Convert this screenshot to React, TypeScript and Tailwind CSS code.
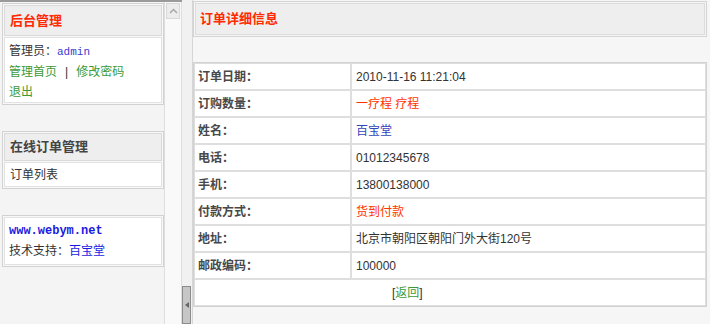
import React from "react";

const F = "font-['Liberation_Sans','Noto_Sans_CJK_SC',sans-serif]";
const MONO = "font-['Liberation_Mono','Noto_Sans_CJK_SC',monospace]";

const rows: { label: string; value: React.ReactNode }[] = [
  { label: "订单日期：", value: <span className="text-[#333]">2010-11-16 11:21:04</span> },
  { label: "订购数量：", value: <span className="text-[#ff3300]">一疗程 疗程</span> },
  { label: "姓名：", value: <span className="text-[#3344bb]">百宝堂</span> },
  { label: "电话：", value: <span className="text-[#333]">01012345678</span> },
  { label: "手机：", value: <span className="text-[#333]">13800138000</span> },
  { label: "付款方式：", value: <span className="text-[#ff3300]">货到付款</span> },
  { label: "地址：", value: <span className="text-[#333]">北京市朝阳区朝阳门外大街120号</span> },
  { label: "邮政编码：", value: <span className="text-[#333]">100000</span> },
];

export default function App() {
  return (
    <div className={`w-[710px] h-[324px] flex bg-[#f4f4f4] overflow-hidden text-[12px] ${F}`}>
      {/* Left frame */}
      <div className="w-[182px] h-full flex border-t-2 border-[#9a9a9a]">
        <div className="w-[164px] flex flex-col pl-[2px] pt-px">
          {/* Panel 1 */}
          <div className="h-[102px] border border-[#d2d2d2] p-px bg-[#f8f8f8] flex flex-col gap-px">
            <div className="h-[31px] border border-[#dadada] bg-[#eeeeee] flex items-center pl-[5px] text-[13px] font-bold text-[#ff2a00]">
              后台管理
            </div>
            <div className="flex-1 border border-[#e2e2e2] bg-white pl-[4px] pt-[3px] leading-[20px] text-[12px] text-[#333]">
              <div>
                管理员：<span className={`${MONO} text-[11px] text-[#3b3bd0]`}>admin</span>
              </div>
              <div>
                <span className="text-[#3a9a3a]">管理首页</span>
                <span className="mx-[8px] text-[#333]">|</span>
                <span className="text-[#3a9a3a]">修改密码</span>
              </div>
              <div className="text-[#3a9a3a]">退出</div>
            </div>
          </div>
          {/* Panel 2 */}
          <div className="mt-[26px] h-[58px] border border-[#d2d2d2] p-px bg-[#f8f8f8] flex flex-col gap-px">
            <div className="h-[28px] border border-[#dadada] bg-[#eeeeee] flex items-center pl-[5px] text-[13px] font-bold text-[#444]">
              在线订单管理
            </div>
            <div className="flex-1 border border-[#e2e2e2] bg-white pl-[5px] flex items-center text-[#333]">
              订单列表
            </div>
          </div>
          {/* Panel 3 */}
          <div className="mt-[26px] h-[52px] border border-[#d2d2d2] p-px bg-[#f8f8f8] flex flex-col">
            <div className="flex-1 border border-[#e2e2e2] bg-white pl-[4px] pt-[3px] leading-[20px] text-[#333]">
              <div className={`${MONO} font-bold text-[12px] text-[#1a1ae0]`}>www.webym.net</div>
              <div>
                技术支持：<span className="text-[#1a1ae0]">百宝堂</span>
              </div>
            </div>
          </div>
        </div>
        {/* scrollbar */}
        <div className="w-[18px] h-full border-l border-r border-[#dedede] bg-[#f9f9f9] pt-px">
          <div className="mx-px h-[16px] bg-[#ececec] border border-[#d8d8d8] flex items-center justify-center">
            <svg width="9" height="6" viewBox="0 0 9 6">
              <path d="M1 5 L4.5 1.5 L8 5" fill="none" stroke="#a8a8a8" strokeWidth="1.5" />
            </svg>
          </div>
        </div>
      </div>

      {/* Splitter */}
      <div className="w-[10px] h-full bg-[#f1f1f1] flex flex-col justify-end">
        <div className="h-[38px] w-[9px] bg-[#c6c6c6] border border-[#8c8c8c] flex items-center justify-center">
          <svg width="4" height="6" viewBox="0 0 4 6">
            <path d="M4 0 L0 3 L4 6 Z" fill="#666" />
          </svg>
        </div>
      </div>

      {/* Right frame */}
      <div className="flex-1 h-full border-l border-[#d6d6d6] bg-[#f6f6f6] pr-[3px] pt-px flex flex-col">
        <div className="h-[36px] border border-[#d4d4d4] p-px bg-[#f6f6f6]">
          <div className="h-full border border-[#dcdcdc] bg-[#eeeeee] flex items-center pl-[4px] text-[13px] font-bold text-[#ff2a00]">
            订单详细信息
          </div>
        </div>
        <div className="h-[25px]" />
        <div className="border border-[#d2d2d2] bg-[#dedede] p-px flex flex-col gap-[2px]">
          {rows.map((r) => (
            <div key={r.label} className="h-[25px] flex gap-[2px]">
              <div className="w-[155px] bg-white flex items-center pl-[3px] font-bold text-[#484848]">
                {r.label}
              </div>
              <div className="flex-1 bg-white flex items-center pl-[4px]">{r.value}</div>
            </div>
          ))}
          <div className="h-[25px] bg-white flex items-center pl-[197px] text-[#333]">
            [<span className="text-[#3a9a3a]">返回</span>]
          </div>
        </div>
      </div>
    </div>
  );
}
